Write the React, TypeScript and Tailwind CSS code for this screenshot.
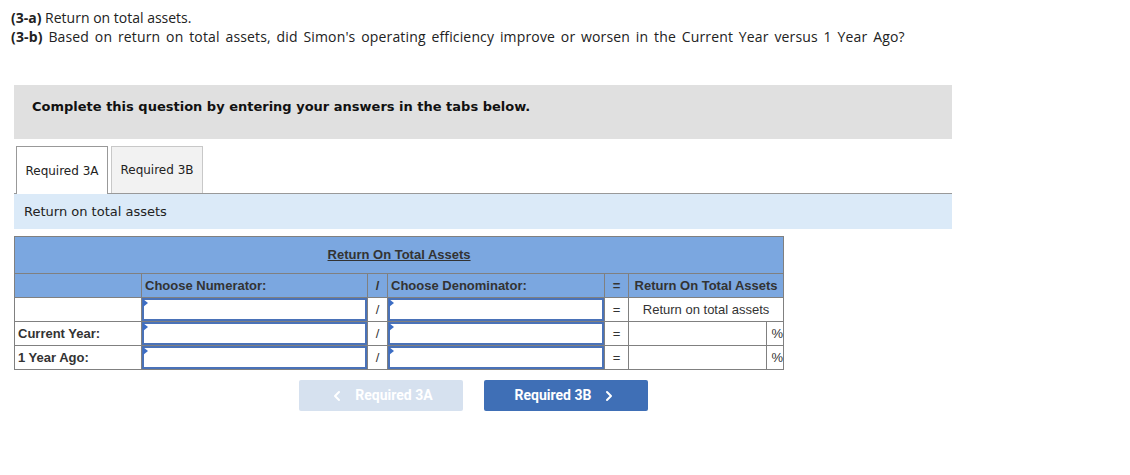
import { ChevronLeft, ChevronRight } from 'lucide-react'

const cell = 'border border-[#808080] p-0'
const inputCell = 'border border-[#808080] p-0 h-[24px] relative'

function Field() {
  return (
    <div className="relative h-[23px] w-full border-2 border-[#4a72b8] bg-white">
      <span className="absolute left-[-1px] top-[-1px] h-0 w-0 border-y-[4px] border-l-[5px] border-y-transparent border-l-[#3c6dc4]" />
    </div>
  )
}

const rows = [
  { label: '', result: true },
  { label: 'Current Year:', result: false },
  { label: '1 Year Ago:', result: false },
]

export default function App() {
  return (
    <div className="h-[475px] w-[1130px] bg-white">
      <div className="pl-[11px] pt-[8px] text-[14px] leading-[19px] text-[#222] font-['Open_Sans','Lato',sans-serif]">
        <p>
          <span className="font-bold">(3-a)</span> Return on total assets.
        </p>
        <p className="tracking-[0.15px] [word-spacing:2px]">
          <span className="font-bold">(3-b)</span> Based on return on total assets, did Simon's operating efficiency
          improve or worsen in the Current Year versus 1 Year Ago?
        </p>
      </div>

      <div className="px-[14px] pt-[39px] w-[938px] box-content">
        <div className="h-[54px] bg-[#e0e0e0] pl-[18px] pt-[14px] font-['DejaVu_Sans','Verdana',sans-serif] text-[13px] leading-[16px] font-bold text-[#111]">
          Complete this question by entering your answers in the tabs below.
        </div>

        <div className="mt-[7px] flex items-end gap-[3px] pl-[2px] font-['DejaVu_Sans','Verdana',sans-serif] text-[12px]">
          <div className="relative z-10 -mb-px flex h-[48px] w-[92px] items-center justify-center border border-b-0 border-[#999] bg-white text-[#222]">
            Required 3A
          </div>
          <div className="flex h-[47px] w-[92px] items-center justify-center border border-b-0 border-[#c8c8c8] bg-[#f2f2f2] text-[#222]">
            Required 3B
          </div>
        </div>
        <div className="flex h-[36px] items-center border-t border-[#999] bg-[#dbeaf8] pl-[10px] pt-[1px] font-['DejaVu_Sans','Verdana',sans-serif] text-[13px] text-[#222]">
          Return on total assets
        </div>

        <table className="mt-[7px] w-[769px] table-fixed border-collapse font-['Liberation_Sans','Arial',sans-serif] text-[13px] text-[#333]">
          <colgroup>
            <col className="w-[127px]" />
            <col className="w-[226px]" />
            <col className="w-[20px]" />
            <col className="w-[217px]" />
            <col className="w-[24px]" />
            <col className="w-[138px]" />
            <col className="w-[17px]" />
          </colgroup>
          <thead>
            <tr className="h-[37px] bg-[#7ba7e0]">
              <th colSpan={7} className={`${cell} text-center font-bold underline`}>
                Return On Total Assets
              </th>
            </tr>
            <tr className="h-[24px] bg-[#7ba7e0]">
              <th className={cell}></th>
              <th className={`${cell} pl-[3px] text-left font-bold`}>Choose Numerator:</th>
              <th className={`${cell} text-center font-bold`}>/</th>
              <th className={`${cell} pl-[3px] text-left font-bold`}>Choose Denominator:</th>
              <th className={`${cell} text-center font-bold`}>=</th>
              <th colSpan={2} className={`${cell} text-center font-bold`}>
                Return On Total Assets
              </th>
            </tr>
          </thead>
          <tbody>
            {rows.map((r, i) => (
              <tr key={i} className="h-[24px]">
                <td className={`${cell} pl-[3px] font-bold`}>{r.label}</td>
                <td className={inputCell}>
                  <Field />
                </td>
                <td className={`${cell} text-center`}>/</td>
                <td className={inputCell}>
                  <Field />
                </td>
                <td className={`${cell} text-center`}>=</td>
                {r.result ? (
                  <td colSpan={2} className={`${cell} text-center`}>
                    Return on total assets
                  </td>
                ) : (
                  <>
                    <td className={cell}></td>
                    <td className={`${cell} text-right`}>%</td>
                  </>
                )}
              </tr>
            ))}
          </tbody>
        </table>

        <div className="mt-[10px] flex gap-[21px] pl-[285px] font-['Roboto','Liberation_Sans',sans-serif] text-[14px] font-bold text-white">
          <button className="flex h-[31px] w-[164px] items-center justify-center gap-[10px] rounded-[2px] bg-[#d6e1ef]">
            <ChevronLeft size={16} strokeWidth={3} />
            Required 3A
          </button>
          <button className="flex h-[31px] w-[164px] items-center justify-center gap-[10px] rounded-[2px] bg-[#3f6fb6]">
            Required 3B
            <ChevronRight size={16} strokeWidth={3} />
          </button>
        </div>
      </div>
    </div>
  )
}
